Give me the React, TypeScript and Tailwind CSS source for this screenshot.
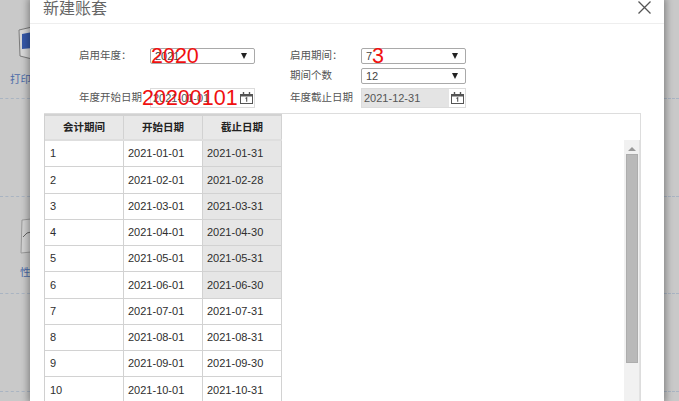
const FONT = "font-['Liberation_Sans','Noto_Sans_CJK_SC',sans-serif]";

const rows = [
  ["1", "2021-01-01", "2021-01-31"],
  ["2", "2021-02-01", "2021-02-28"],
  ["3", "2021-03-01", "2021-03-31"],
  ["4", "2021-04-01", "2021-04-30"],
  ["5", "2021-05-01", "2021-05-31"],
  ["6", "2021-06-01", "2021-06-30"],
  ["7", "2021-07-01", "2021-07-31"],
  ["8", "2021-08-01", "2021-08-31"],
  ["9", "2021-09-01", "2021-09-30"],
  ["10", "2021-10-01", "2021-10-31"],
];

function CalendarIcon() {
  return (
    <svg width="13" height="12" viewBox="0 0 13 12" fill="none" stroke="#555">
      <rect x="0.5" y="2.5" width="12" height="9" />
      <path d="M1 3.5h11" strokeWidth="2" />
      <path d="M3.5 0v3M9.5 0v3" strokeWidth="1.4" />
      <path d="M5.5 6.5l1.2-.8v4" strokeWidth="1.1" />
    </svg>
  );
}

function Select({ value }: { value: string }) {
  return (
    <div className="w-[105px] h-[16px] flex items-center justify-between border border-[#a9a9a9] rounded-[2px] bg-white pl-1 pr-[7px] text-[11px] text-[#444]">
      <span>{value}</span>
      <span className="w-0 h-0 border-x-[3px] border-x-transparent border-t-[6px] border-t-[#222]" />
    </div>
  );
}

function DateInput({ value, disabled }: { value: string; disabled?: boolean }) {
  return (
    <div
      className={`w-[105px] h-[20px] flex items-center border border-[#dcdcdc] text-[11px] text-[#555] ${disabled ? "bg-[#e4e4e4]" : "bg-white"}`}
    >
      <span className="flex-1 pl-[2px]">{value}</span>
      <span className="w-[16px] h-full bg-white flex items-center justify-center">
        <CalendarIcon />
      </span>
    </div>
  );
}

function Strip({ left }: { left?: boolean }) {
  // background page peeking out next to the dialog
  return (
    <div className={`h-full overflow-hidden bg-[#c9c9c9] ${left ? "w-[30px]" : "w-[15px]"}`}>
      {[0, 1, 2, 3].map((i) => (
        <div
          key={i}
          className="h-[97.7px] first:h-[99px] border-b border-dashed border-[#a9b4c2] relative"
        >
          {left && i === 0 && (
            <>
              <svg className="absolute left-[18px] top-[26px]" width="14" height="36" viewBox="0 0 14 36">
                <path d="M1 4L14 1v32L2 30z" fill="#d8d8d8" stroke="#7a7a7a" />
                <path d="M4 8l10-2v16l-10 1z" fill="#3658a8" />
              </svg>
              <span className="absolute left-[10px] top-[73px] text-[10.5px] leading-[12px] text-[#4a6aa8] whitespace-nowrap">打印</span>
            </>
          )}
          {left && i === 2 && (
            <>
              <svg className="absolute left-[19px] top-[20px]" width="12" height="38" viewBox="0 0 12 38">
                <path d="M3 3l9-1v33l-10 1z" fill="#d2d2d2" stroke="#9a9a9a" />
                <path d="M4 20l4-4 4-1" fill="none" stroke="#666" />
              </svg>
              <span className="absolute left-[20px] top-[69px] text-[10.5px] leading-[12px] text-[#4a6aa8] whitespace-nowrap">性</span>
            </>
          )}
        </div>
      ))}
    </div>
  );
}

export default function App() {
  return (
    <div className={`${FONT} w-[679px] h-[401px] overflow-hidden flex bg-[#c9c9c9]`}>
      <Strip left />

      {/* Dialog */}
      <div className="relative z-10 w-[634px] h-full bg-white shadow-[0_0_7px_2px_rgba(0,0,0,0.35)]">
        <div className="h-[24px] border-b border-[#eeeeee] pl-[13px] pr-[13px] pt-[1px] flex items-start justify-between">
          <h1 className="text-[16px] leading-[16px] text-[#666] font-normal">新建账套</h1>
          <svg width="13" height="13" viewBox="0 0 13 13" stroke="#555" strokeWidth="1.3" className="shrink-0">
            <path d="M.5.5l12 12M12.5.5l-12 12" />
          </svg>
        </div>

        {/* Form */}
        <div className="pl-[49px] pt-[24px] text-[10.5px] text-[#555] flex flex-col">
          <div className="flex items-center h-[16px] mb-[4px]">
            <label className="w-[71px]">启用年度：</label>
            <div className="relative">
              <Select value="2021" />
              <span className="absolute left-[1px] -top-[4px] text-[21.5px] leading-[24px] text-[#f01010]">2020</span>
            </div>
            <label className="w-[71px] ml-[35px]">启用期间：</label>
            <div className="relative">
              <Select value="7" />
              <span className="absolute left-[11px] -top-[4px] text-[21.5px] leading-[24px] text-[#f01010]">3</span>
            </div>
          </div>
          <div className="flex items-center h-[16px] mb-[4px]">
            <div className="w-[211px]" />
            <label className="w-[71px]">期间个数</label>
            <Select value="12" />
          </div>
          <div className="flex items-center h-[20px]">
            <label className="w-[71px]">年度开始日期</label>
            <div className="relative">
              <DateInput value="2021-01-01" />
              <span className="absolute -left-[8px] -top-[2px] text-[21.5px] leading-[24px] text-[#f01010]">20200101</span>
            </div>
            <label className="w-[71px] ml-[35px]">年度截止日期</label>
            <DateInput value="2021-12-31" disabled />
          </div>
        </div>

        {/* Period table */}
        <div className="ml-[14px] mt-[5px] w-[597px] h-[300px] border-t border-r border-[#dddddd] flex justify-between">
          <div className="w-[238px] text-[11px] text-[#2e2e2e] border-l border-[#d0d0d0]">
            <div className="grid grid-cols-[79px_79px_79px] h-[27px] bg-[#e8e8e8] border-t-2 border-b-2 border-t-[#d2d2d2] border-b-[#dedede] text-[10.5px] font-bold text-[#222]">
              {["会计期间", "开始日期", "截止日期"].map((h) => (
                <div key={h} className="flex items-center justify-center border-r border-[#d2d2d2]">
                  {h}
                </div>
              ))}
            </div>
            {rows.map((r, i) => (
              <div key={r[0]} className="grid grid-cols-[79px_79px_79px] h-[26.25px] border-b border-[#d2d2d2]">
                <div className="flex items-center pl-[5px] border-r border-[#d2d2d2]">{r[0]}</div>
                <div className="flex items-center pl-[4px] border-r border-[#d2d2d2]">{r[1]}</div>
                <div className={`flex items-center pl-[4px] border-r border-[#d2d2d2] ${i < 6 ? "bg-[#e6e6e6]" : ""}`}>
                  {r[2]}
                </div>
              </div>
            ))}
          </div>

          {/* Scrollbar */}
          <div className="w-[16px] h-full mt-[26px] bg-[#f1f1f1] border-r border-[#e2e2e2] flex flex-col items-center">
            <span className="mt-[7px] mb-[3px] w-0 h-0 border-x-[4px] border-x-transparent border-b-[4px] border-b-[#999]" />
            <div className="w-[12px] h-[209px] bg-[#b9b9b9] border border-[#adadad]" />
          </div>
        </div>
      </div>

      <Strip />
    </div>
  );
}
